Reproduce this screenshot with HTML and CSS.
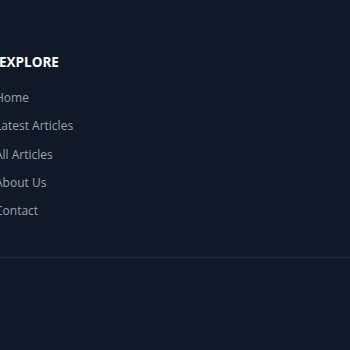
FILE: index.html
```html
<!DOCTYPE html>
<html lang="en">
<head>
    <meta charset="UTF-8">
    <title>Footer</title>
    <link rel="stylesheet" href="styles.css">
</head>
<body>
<footer class="footer">
    <div class="footer-col">
        <h3 class="footer-title">Explore</h3>
        <ul class="footer-links">
            <li><a href="#">Home</a></li>
            <li><a href="#">Latest Articles</a></li>
            <li><a href="#">All Articles</a></li>
            <li><a href="#">About Us</a></li>
            <li><a href="#">Contact</a></li>
        </ul>
    </div>
    <div class="footer-bottom"></div>
</footer>
</body>
</html>
```

FILE: styles.css
```css
html, body {
    height: 100%;
}

body {
    margin: 0;
    background: #111827;
    font-family: "Open Sans", "Noto Sans", sans-serif;
    overflow: hidden;
}

.footer {
    padding-top: 52px;
}

.footer-col {
    margin-left: -1px;
}

.footer-title {
    margin: 0 0 16px;
    font-size: 13.5px;
    line-height: 20px;
    font-weight: 700;
    text-transform: uppercase;
    color: #fff;
}

.footer-links {
    list-style: none;
    margin: 0 0 0 -4px;
    padding: 0;
}

.footer-links li {
    height: 28.3px;
    line-height: 20px;
    font-size: 12px;
}

.footer-links a {
    color: #9ca3af;
    text-decoration: none;
}

.footer-bottom {
    margin-top: 28px;
    border-top: 1px solid #1f2937;
}
```
